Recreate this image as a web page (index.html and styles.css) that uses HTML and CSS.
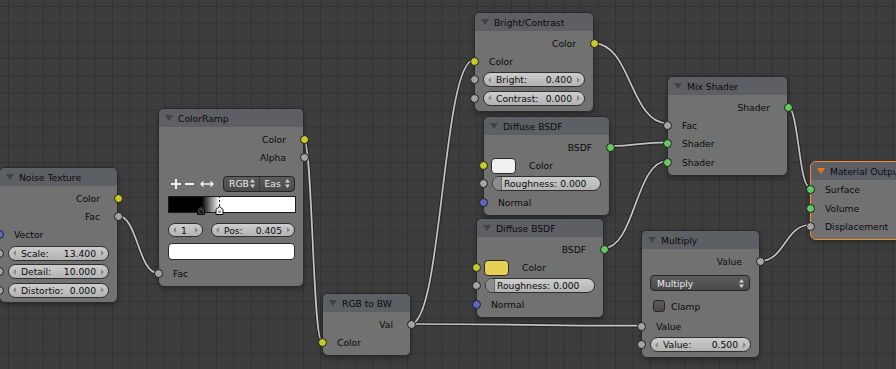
FILE: index.html
```html
<!DOCTYPE html>
<html lang="en">
<head>
    <meta charset="UTF-8">
    <title>Node Editor</title>
    <link rel="stylesheet" href="styles.css">
</head>
<body>
    <div class="editor">
        <!-- Links between sockets -->
        <svg class="links" width="896" height="369" viewBox="0 0 896 369">
            <g class="link-shadow">
                <path d="M117.5 215.7 C137.9 215.7 137.9 273.3 158.3 273.3"/>
                <path d="M303.5 138.3 C312.6 138.3 312.6 340.7 321.7 340.7"/>
                <path d="M410.7 324 C442.4 324 442.3 60 474 60"/>
                <path d="M410.7 324 C525.9 324 525.8 325.7 641 325.7"/>
                <path d="M594 43.3 C630.7 43.3 630.6 123.3 667.3 123.3"/>
                <path d="M609.3 146 C638.3 146 638.3 142.3 667.3 142.3"/>
                <path d="M603.3 248.3 C635.3 248.3 635.3 161 667.3 161"/>
                <path d="M787.3 106 C798.7 106 798.6 187.3 810 187.3"/>
                <path d="M760 261 C785 261 785 225 810 225"/>
            </g>
            <g class="link-core">
                <path d="M117.5 215.7 C137.9 215.7 137.9 273.3 158.3 273.3"/>
                <path d="M303.5 138.3 C312.6 138.3 312.6 340.7 321.7 340.7"/>
                <path d="M410.7 324 C442.4 324 442.3 60 474 60"/>
                <path d="M410.7 324 C525.9 324 525.8 325.7 641 325.7"/>
                <path d="M594 43.3 C630.7 43.3 630.6 123.3 667.3 123.3"/>
                <path d="M609.3 146 C638.3 146 638.3 142.3 667.3 142.3"/>
                <path d="M603.3 248.3 C635.3 248.3 635.3 161 667.3 161"/>
                <path d="M787.3 106 C798.7 106 798.6 187.3 810 187.3"/>
                <path d="M760 261 C785 261 785 225 810 225"/>
            </g>
        </svg>

        <!-- Noise Texture -->
        <div class="node n-noise">
            <div class="node-head"><span class="fold"></span>Noise Texture</div>
            <div class="node-body">
                <div class="row out">Color<i class="sock yellow"></i></div>
                <div class="row out">Fac<i class="sock gray"></i></div>
                <div class="row in"><i class="sock blue"></i>Vector</div>
                <div class="row in field-row"><i class="sock gray"></i>
                    <div class="num"><span class="arr-l"></span><span class="lbl">Scale:</span><span>13.400</span><span class="arr-r"></span></div>
                </div>
                <div class="row in field-row"><i class="sock gray"></i>
                    <div class="num"><span class="arr-l"></span><span class="lbl">Detail:</span><span>10.000</span><span class="arr-r"></span></div>
                </div>
                <div class="row in field-row"><i class="sock gray"></i>
                    <div class="num"><span class="arr-l"></span><span class="lbl">Distortio:</span><span>0.000</span><span class="arr-r"></span></div>
                </div>
            </div>
        </div>

        <!-- ColorRamp -->
        <div class="node n-ramp">
            <div class="node-head"><span class="fold"></span>ColorRamp</div>
            <div class="node-body">
                <div class="row out">Color<i class="sock yellow"></i></div>
                <div class="row out">Alpha<i class="sock gray"></i></div>
                <div class="ramp-tools">
                    <svg class="tool-icons" width="48" height="14" viewBox="0 0 48 14">
                        <path d="M3 7 H13 M8 2 V12"/>
                        <path d="M17 7 H26"/>
                        <path d="M33 7 H45 M35.5 4.5 L33 7 L35.5 9.5 M42.5 4.5 L45 7 L42.5 9.5" class="thin"/>
                    </svg>
                    <div class="menu-pair">
                        <span class="menu-half">RGB<svg class="updown" width="5" height="9" viewBox="0 0 5 9"><path d="M0 3.5 L2.5 0 L5 3.5 Z M0 5.5 L2.5 9 L5 5.5 Z"/></svg></span>
                        <span class="menu-half">Eas<svg class="updown" width="5" height="9" viewBox="0 0 5 9"><path d="M0 3.5 L2.5 0 L5 3.5 Z M0 5.5 L2.5 9 L5 5.5 Z"/></svg></span>
                    </div>
                </div>
                <div class="ramp-bar">
                    <svg class="ramp-marks" width="128" height="19" viewBox="0 0 128 19">
                        <path d="M51.5 0 V11" class="dash"/>
                        <path d="M29.5 18.5 V13.5 L33 10.5 L36.5 13.5 V18.5 Z" class="mark-dark"/>
                        <path d="M48 18.5 V13.5 L51.5 10.5 L55 13.5 V18.5 Z" class="mark-light"/>
                        <rect x="31.5" y="14.5" width="3" height="2.5" class="mark-dot"/>
                        <rect x="50" y="14.5" width="3" height="2.5" class="mark-dot-light"/>
                    </svg>
                </div>
                <div class="ramp-fields">
                    <div class="num stop"><span class="arr-l"></span><span class="lbl">1</span><span class="arr-r"></span></div>
                    <div class="num"><span class="arr-l"></span><span class="lbl">Pos:</span><span>0.405</span><span class="arr-r"></span></div>
                </div>
                <div class="ramp-swatch"></div>
                <div class="row in"><i class="sock gray"></i>Fac</div>
            </div>
        </div>

        <!-- RGB to BW -->
        <div class="node n-rgbbw">
            <div class="node-head"><span class="fold"></span>RGB to BW</div>
            <div class="node-body">
                <div class="row out">Val<i class="sock gray"></i></div>
                <div class="row in"><i class="sock yellow"></i>Color</div>
            </div>
        </div>

        <!-- Bright/Contrast -->
        <div class="node n-bright">
            <div class="node-head"><span class="fold"></span>Bright/Contrast</div>
            <div class="node-body">
                <div class="row out">Color<i class="sock yellow"></i></div>
                <div class="row in"><i class="sock yellow"></i>Color</div>
                <div class="row in field-row"><i class="sock gray"></i>
                    <div class="num"><span class="arr-l"></span><span class="lbl">Bright:</span><span>0.400</span><span class="arr-r"></span></div>
                </div>
                <div class="row in field-row"><i class="sock gray"></i>
                    <div class="num"><span class="arr-l"></span><span class="lbl">Contrast:</span><span>0.000</span><span class="arr-r"></span></div>
                </div>
            </div>
        </div>

        <!-- Diffuse BSDF (white) -->
        <div class="node n-diff1">
            <div class="node-head"><span class="fold"></span>Diffuse BSDF</div>
            <div class="node-body">
                <div class="row out">BSDF<i class="sock green"></i></div>
                <div class="row in swatch-row"><i class="sock yellow"></i><span class="swatch white"></span>Color</div>
                <div class="row in field-row"><i class="sock gray"></i>
                    <div class="slider"><span>Roughness: 0.000</span></div>
                </div>
                <div class="row in"><i class="sock blue"></i>Normal</div>
            </div>
        </div>

        <!-- Diffuse BSDF (yellow) -->
        <div class="node n-diff2">
            <div class="node-head"><span class="fold"></span>Diffuse BSDF</div>
            <div class="node-body">
                <div class="row out">BSDF<i class="sock green"></i></div>
                <div class="row in swatch-row"><i class="sock yellow"></i><span class="swatch gold"></span>Color</div>
                <div class="row in field-row"><i class="sock gray"></i>
                    <div class="slider"><span>Roughness: 0.000</span></div>
                </div>
                <div class="row in"><i class="sock blue"></i>Normal</div>
            </div>
        </div>

        <!-- Mix Shader -->
        <div class="node n-mix">
            <div class="node-head"><span class="fold"></span>Mix Shader</div>
            <div class="node-body">
                <div class="row out">Shader<i class="sock green"></i></div>
                <div class="row in"><i class="sock gray"></i>Fac</div>
                <div class="row in"><i class="sock green"></i>Shader</div>
                <div class="row in"><i class="sock green"></i>Shader</div>
            </div>
        </div>

        <!-- Multiply -->
        <div class="node n-mult">
            <div class="node-head"><span class="fold"></span>Multiply</div>
            <div class="node-body">
                <div class="row out">Value<i class="sock gray"></i></div>
                <div class="menu-row">
                    <div class="menu">Multiply<svg class="updown" width="5" height="9" viewBox="0 0 5 9"><path d="M0 3.5 L2.5 0 L5 3.5 Z M0 5.5 L2.5 9 L5 5.5 Z"/></svg></div>
                </div>
                <div class="check-row"><span class="check"></span>Clamp</div>
                <div class="row in"><i class="sock gray"></i>Value</div>
                <div class="row in field-row"><i class="sock gray"></i>
                    <div class="num"><span class="arr-l"></span><span class="lbl">Value:</span><span>0.500</span><span class="arr-r"></span></div>
                </div>
            </div>
        </div>

        <!-- Material Output -->
        <div class="node n-output">
            <div class="node-head"><span class="fold orange"></span>Material Output</div>
            <div class="node-body">
                <div class="row in"><i class="sock green"></i>Surface</div>
                <div class="row in"><i class="sock green"></i>Volume</div>
                <div class="row in"><i class="sock gray"></i>Displacement</div>
            </div>
        </div>
    </div>
</body>
</html>
```

FILE: styles.css
```css
/* Node editor colours */
:root {
    --grid-bg: #3d3d3d;
    --grid-line: #323232;
    --node-bg: #717171;
    --node-head: #5e5f65;
    --node-border: #2a2a2a;
    --text: #0a0a0a;
    --sock-yellow: #c8c82a;
    --sock-gray: #a3a3a3;
    --sock-blue: #6464c8;
    --sock-green: #63c763;
}

* {
    margin: 0;
    padding: 0;
    box-sizing: border-box;
}

body {
    background: var(--grid-bg);
    font-family: "DejaVu Sans", sans-serif;
    font-size: 9.2px;
    color: var(--text);
    overflow: hidden;
}

.editor {
    position: relative;
    width: 896px;
    height: 369px;
    overflow: hidden;
    background-color: var(--grid-bg);
    background-image:
        linear-gradient(to right, var(--grid-line) 1px, transparent 1px),
        linear-gradient(to bottom, var(--grid-line) 1px, transparent 1px);
    background-size: 17.35px 17.35px;
    background-position: 8px 6px;
}

/* Links */
.links {
    position: absolute;
    left: 0;
    top: 0;
}

.links path {
    fill: none;
}

.link-shadow path {
    stroke: #1e1e1e;
    stroke-width: 3.6;
    stroke-opacity: 0.85;
}

.link-core path {
    stroke: #c4c4c4;
    stroke-width: 1.7;
}

/* Nodes */
.node {
    position: absolute;
    background: var(--node-bg);
    border: 1px solid var(--node-border);
    border-radius: 6px;
    box-shadow: 0 2px 5px rgba(0, 0, 0, 0.35);
}

.node-head {
    height: 18px;
    display: flex;
    align-items: center;
    gap: 5px;
    padding-left: 6px;
    background: var(--node-head);
    border-radius: 5px 5px 0 0;
    white-space: nowrap;
    overflow: hidden;
}

.fold {
    width: 0;
    height: 0;
    border-left: 4px solid transparent;
    border-right: 4px solid transparent;
    border-top: 6px solid #414246;
}

.fold.orange {
    border-top-color: #e8770f;
}

.node-body {
    padding: 3px 0 3px;
}

.n-noise  { left: -1px;  top: 167px; width: 119px; }
.n-ramp   { left: 158px; top: 108px; width: 146px; }
.n-rgbbw  { left: 322px; top: 293px; width: 89px; }
.n-bright { left: 474px; top: 12px;  width: 120px; }
.n-diff1  { left: 483px; top: 116px; width: 127px; }
.n-diff2  { left: 476px; top: 218px; width: 128px; }
.n-mix    { left: 667px; top: 76px;  width: 121px; }
.n-mult   { left: 641px; top: 230px; width: 119px; }
.n-output { left: 810px; top: 161px; width: 120px; border-color: #f0902e; }

.n-output .node-body {
    padding-top: 0;
}

.n-output .row {
    height: 18.7px;
}

/* Socket rows */
.row {
    position: relative;
    height: 18.4px;
    display: flex;
    align-items: center;
    padding: 0 14px;
    white-space: nowrap;
}

.row.out {
    justify-content: flex-end;
    padding-right: 17px;
}

.row.field-row {
    padding: 0 8px 0 8px;
}

.sock {
    position: absolute;
    top: 50%;
    width: 9px;
    height: 9px;
    margin-top: -4.5px;
    border-radius: 50%;
    border: 1px solid #1b1b1b;
}

.out .sock { right: -5.5px; }
.in .sock { left: -5.5px; }

.yellow { background: var(--sock-yellow); }
.gray { background: var(--sock-gray); }
.blue { background: var(--sock-blue); }
.green { background: var(--sock-green); }

/* Number fields */
.num {
    flex: 1;
    height: 15px;
    display: flex;
    align-items: center;
    gap: 4px;
    padding: 0 4px;
    border: 1px solid #2f2f2f;
    border-radius: 7.5px;
    background: linear-gradient(#cdcdcd, #b3b3b3);
    white-space: nowrap;
}

.num .lbl {
    flex: 1;
}

.arr-l, .arr-r {
    width: 0;
    height: 0;
    border-top: 3px solid transparent;
    border-bottom: 3px solid transparent;
}

.arr-l { border-right: 3px solid #8a8a8a; margin-right: 1px; }
.arr-r { border-left: 3px solid #8a8a8a; margin-left: 1px; }

.slider {
    position: relative;
    flex: 1;
    height: 15px;
    display: flex;
    align-items: center;
    padding-left: 11px;
    border: 1px solid #2f2f2f;
    border-radius: 7.5px;
    background: linear-gradient(#cdcdcd, #b3b3b3);
    overflow: hidden;
}

.slider::before {
    content: "";
    position: absolute;
    left: 0;
    top: 0;
    bottom: 0;
    width: 8px;
    background: #8c8c8c;
    border-right: 1px solid #6a6a6a;
}

.slider span {
    position: relative;
}

/* Colour swatch rows */
.swatch-row {
    padding-left: 7px;
    gap: 13px;
}

.swatch {
    width: 25px;
    height: 16px;
    border: 1px solid #2a2a2a;
    border-radius: 4px;
}

.swatch.white { background: #f0f0f0; }
.swatch.gold { background: #e8cf55; }

/* ColorRamp widgets */
.ramp-tools {
    display: flex;
    align-items: center;
    justify-content: space-between;
    height: 16px;
    margin: 9px 8px 0 9px;
}

.tool-icons path {
    fill: none;
    stroke: #f2f2f2;
    stroke-width: 2;
}

.tool-icons path.thin {
    stroke-width: 1.3;
}

.menu-pair {
    display: flex;
    width: 72px;
    height: 16px;
    border: 1px solid #262626;
    border-radius: 4px;
    background: linear-gradient(#5c5c5c, #4a4a4a);
    color: #ececec;
    overflow: hidden;
}

.menu-half {
    flex: 1;
    display: flex;
    align-items: center;
    justify-content: space-between;
    padding: 0 4px 0 5px;
}

.menu-half + .menu-half {
    border-left: 1px solid #3a3a3a;
}

.updown path {
    fill: #cfcfcf;
}

.ramp-bar {
    position: relative;
    height: 17px;
    margin: 4px 7px 0 9px;
    border: 1px solid #1a1a1a;
    background: linear-gradient(to right, #000 0, #000 26%, #fff 40%, #fff 100%);
}

.ramp-marks {
    position: absolute;
    left: -1px;
    top: -1px;
}

.ramp-marks .dash {
    stroke: #222;
    stroke-width: 1;
    stroke-dasharray: 2 2;
}

.mark-dark {
    fill: #3a3a3a;
    stroke: #0a0a0a;
    stroke-width: 1;
}

.mark-light {
    fill: #f4f4f4;
    stroke: #0a0a0a;
    stroke-width: 1;
}

.mark-dot { fill: #111; }
.mark-dot-light { fill: #9a9a9a; }

.ramp-fields {
    display: flex;
    gap: 8px;
    margin: 10px 8px 0 9px;
}

.ramp-fields .num {
    height: 14.5px;
}

.ramp-fields .num.stop {
    flex: 0 0 35px;
}

.ramp-swatch {
    height: 17px;
    margin: 6px 8px 4px 9px;
    background: #fff;
    border: 1px solid #2a2a2a;
    border-radius: 4px;
}

/* Math node widgets */
.menu-row {
    padding: 5px 9px 0 8px;
}

.menu {
    height: 16px;
    display: flex;
    align-items: center;
    justify-content: space-between;
    padding: 0 5px 0 6px;
    border: 1px solid #262626;
    border-radius: 4px;
    background: linear-gradient(#5c5c5c, #4a4a4a);
    color: #ececec;
}

.check-row {
    height: 22px;
    display: flex;
    align-items: center;
    gap: 6px;
    padding-left: 11px;
    margin-top: 4px;
}

.check {
    width: 12px;
    height: 12px;
    border: 1px solid #262626;
    border-radius: 3px;
    background: linear-gradient(#5a5a5a, #4a4a4a);
}
```
